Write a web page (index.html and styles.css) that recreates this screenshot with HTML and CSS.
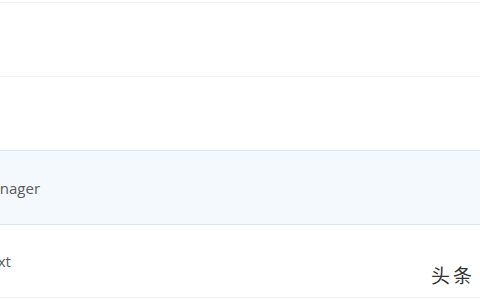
FILE: index.html
```html
<!DOCTYPE html>
<html>
<head>
<meta charset="utf-8">
<link rel="stylesheet" href="styles.css">
</head>
<body>
<div class="list">
  <div class="row"></div>
  <div class="row"></div>
  <div class="row active"><span class="label">Manager</span></div>
  <div class="row"><span class="label">Next</span></div>
</div>
<div class="watermark">头条</div>
</body>
</html>
```
FILE: styles.css
```css
html, body {
  margin: 0;
  padding: 0;
  background: #ffffff;
  width: 480px;
  height: 300px;
  overflow: hidden;
}
.list {
  padding-top: 2px;
  display: flex;
  flex-direction: column;
}
.row {
  box-sizing: border-box;
  height: 74px;
  border-top: 1px solid #f2f2f2;
  display: flex;
  align-items: center;
}
.row:last-child {
  border-bottom: 1px solid #f2f2f2;
}
.row.active {
  background: #f4f9fd;
  border-top: 1px solid #d9e9f3;
}
.row.active + .row {
  border-top: 1px solid #d9e9f3;
}
.label {
  margin-left: -22px;
  font-family: "Open Sans", "DejaVu Sans", sans-serif;
  font-size: 15px;
  color: #5a5a5a;
  line-height: 20px;
}
.watermark {
  position: absolute;
  right: 5px;
  top: 263px;
  font-family: "Noto Sans CJK SC", sans-serif;
  font-size: 19px;
  font-weight: 400;
  color: #333333;
  letter-spacing: 3px;
  line-height: 24px;
}
```
